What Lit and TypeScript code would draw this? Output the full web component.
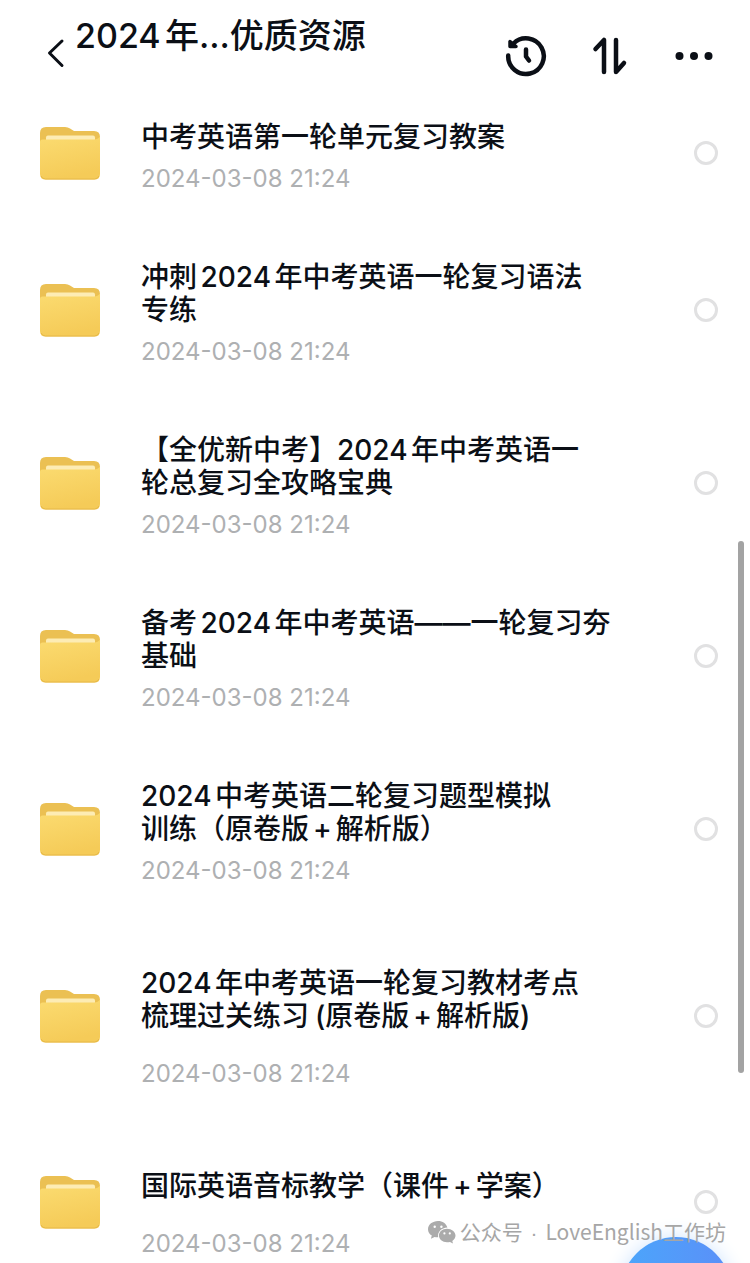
import { LitElement, html, css, svg } from "lit";
import { customElement, property } from "lit/decorators.js";
import { classMap } from "lit/directives/class-map.js";

interface Folder {
  lines: string[];
  date: string;
  loose?: boolean;
}

const DATE = "2024-03-08 21:24";

const FOLDERS: Folder[] = [
  { lines: ["中考英语第一轮单元复习教案"], date: DATE },
  { lines: ["冲刺2024年中考英语一轮复习语法", "专练"], date: DATE },
  { lines: ["【全优新中考】2024年中考英语一", "轮总复习全攻略宝典"], date: DATE },
  { lines: ["备考2024年中考英语——一轮复习夯", "基础"], date: DATE },
  { lines: ["2024中考英语二轮复习题型模拟", "训练（原卷版+解析版）"], date: DATE },
  { lines: ["2024年中考英语一轮复习教材考点", "梳理过关练习(原卷版+解析版)"], date: DATE, loose: true },
  { lines: ["国际英语音标教学（课件+学案）"], date: DATE, loose: true },
];

// Latin signs between Chinese characters get a little air around them.
const spaced = (line: string) =>
  line.split(/([+(])/).map((part) =>
    part === "+"
      ? html`<span class="plus">+</span>`
      : part === "("
        ? html`<span class="open">(</span>`
        : part
  );

const folderIcon = svg`
  <svg class="folder" viewBox="0 0 60 54" aria-hidden="true">
    <defs>
      <linearGradient id="front" x1="0" y1="0" x2="0.3" y2="1">
        <stop offset="0" stop-color="#fbdb70"/>
        <stop offset="1" stop-color="#f5cb58"/>
      </linearGradient>
    </defs>
    <path fill="#ebc053" d="M0 16V7Q0 1 6 1H25Q28 1 30 2.500L34 5H54Q60 5 60 11V20H0Z"/>
    <path fill="#fdecb4" d="M6 15V11.500Q6 9.500 8 9.500H53Q55 9.500 55 11.500V15Z"/>
    <path fill="url(#front)" d="M0 16Q0 13.500 2.500 13.500H54Q58 13.500 60 10.500V48Q60 53.500 54.500 53.500H5.500Q0 53.500 0 48Z"/>
    <path fill="none" stroke="#e6b848" d="M1 50Q2.500 53 5.500 53H54.500Q57.500 53 59 50"/>
  </svg>`;

@customElement("folder-row")
export class FolderRow extends LitElement {
  @property({ attribute: false }) folder!: Folder;

  static styles = css`
    :host {
      display: block;
    }
    .row {
      display: flex;
      align-items: center;
      padding: 36px 32px 36px 40px;
    }
    .folder {
      flex: none;
      width: 60px;
      height: 54px;
      margin: 0 41px 4px 0;
    }
    .text {
      flex: 1;
      min-width: 0;
    }
    .name {
      margin: 0 0 15px;
      font-size: 28px;
      font-weight: 500;
      line-height: 33px;
      color: #0b0f16;
      white-space: nowrap;
      text-autospace: normal;
    }
    .plus {
      margin: 0 4px;
    }
    .open {
      margin-left: 6px;
    }
    .date {
      display: block;
      font-size: 24px;
      line-height: 20px;
      color: #aeb0b2;
    }
    .pick {
      appearance: none;
      flex: none;
      width: 24px;
      height: 24px;
      margin: 0 0 4px;
      border: 3px solid #e1e1e2;
      border-radius: 50%;
      background: #fff;
    }
    .pick:checked {
      background: #4a90f5;
    }
    .loose {
      padding-top: 50px;
    }
    .loose .name {
      margin-bottom: 31px;
    }
    .loose .folder,
    .loose .pick {
      margin-bottom: 20px;
    }
  `;

  render() {
    const { lines, date, loose } = this.folder;
    return html`
      <div class=${classMap({ row: true, loose: !!loose })}>
        ${folderIcon}
        <div class="text">
          <h2 class="name">${lines.map((line, i) => (i ? html`<br />${spaced(line)}` : spaced(line)))}</h2>
          <time class="date">${date}</time>
        </div>
        <input class="pick" type="checkbox" aria-label=${lines.join("")} />
      </div>
    `;
  }
}

@customElement("app-root")
export class AppRoot extends LitElement {
  static styles = css`
    :host {
      display: block;
      position: relative;
      height: 100vh;
      overflow: hidden;
      background: #fff;
      font-family: Inter, "Noto Sans CJK SC", sans-serif;
      color: #0b0f16;
    }
    .bar {
      display: flex;
      align-items: flex-start;
      height: 85px;
      box-sizing: border-box;
      padding: 16px 34px 0 44px;
    }
    button {
      padding: 0;
      border: 0;
      background: none;
      color: inherit;
    }
    .icon {
      display: block;
    }
    .back {
      margin: 20px 7px 0 0;
    }
    .title {
      flex: 1;
      margin: 0;
      font-size: 34px;
      line-height: 40px;
      font-weight: 500;
      white-space: nowrap;
      text-autospace: normal;
    }
    .actions {
      display: flex;
      gap: 40px;
      margin-top: 18px;
    }
    .thumb {
      position: absolute;
      top: 541px;
      right: 6px;
      width: 6px;
      height: 532px;
      border-radius: 3px;
      background: #a3a3a3;
    }
    .add {
      position: absolute;
      right: 18px;
      bottom: -86px;
      width: 112px;
      height: 112px;
      border-radius: 50%;
      background: linear-gradient(90deg, #4ba6fb, #5b8ff8);
      box-shadow: 0 0 20px #cfe4fd;
    }
    .mark {
      position: absolute;
      right: 24px;
      bottom: 16px;
      display: flex;
      align-items: center;
      gap: 4px;
      font-family: "Noto Sans CJK SC", sans-serif;
      font-size: 21px;
      line-height: 28px;
      color: #a6a6a6;
      white-space: nowrap;
    }
    .dot {
      margin: 0 2px;
      font-family: "Liberation Sans", sans-serif;
    }
  `;

  render() {
    return html`
      <header class="bar">
        <button class="back" aria-label="返回">
          <svg class="icon" width="24" height="34" viewBox="0 0 24 34" fill="none" stroke="currentColor" stroke-width="3" stroke-linecap="round" stroke-linejoin="round">
            <path d="M18 5L5.500 17L18 29.500" />
          </svg>
        </button>
        <h1 class="title">2024年...优质资源</h1>
        <div class="actions">
          <button aria-label="历史">
            <svg class="icon" width="44" height="44" viewBox="0 0 44 44" fill="none" stroke="currentColor" stroke-width="4.500" stroke-linecap="round" stroke-linejoin="round">
              <path d="M4.200 21.500A17.800 17.800 0 1 0 9.500 9.500" />
              <path fill="currentColor" stroke-width="3.500" d="M6 7.500V12.500H12Z" />
              <path d="M22 15.500V22.500L25 26.500" />
            </svg>
          </button>
          <button aria-label="排序">
            <svg class="icon" width="44" height="44" viewBox="0 0 44 44" fill="none" stroke="currentColor" stroke-width="4.500" stroke-linecap="round" stroke-linejoin="round">
              <path d="M7.500 15L16 6V38" />
              <path d="M28 6V38L36 29" />
            </svg>
          </button>
          <button aria-label="更多">
            <svg class="icon" width="44" height="44" viewBox="0 0 44 44" fill="currentColor">
              <circle cx="7.500" cy="22" r="4" />
              <circle cx="22" cy="22" r="4" />
              <circle cx="36.500" cy="22" r="4" />
            </svg>
          </button>
        </div>
      </header>
      <main>${FOLDERS.map((f) => html`<folder-row .folder=${f}></folder-row>`)}</main>
      <div class="thumb"></div>
      <button class="add" aria-label="新建"></button>
      <div class="mark">
        <svg class="icon" width="28" height="24" viewBox="0 0 28 24" aria-hidden="true">
          <path fill="#ababab" d="M10 1C4.500 1 0 4.600 0 9.200C0 11.900 1.500 14.100 3.800 15.600L2.900 18.800L6.600 16.900Q8.200 17.400 10.200 17.300C9.300 12 13.300 8 19.400 7.600C18.400 3.700 14.600 1 10 1Z" />
          <path fill="#ababab" d="M19 8.800C14.300 8.800 10.900 11.900 10.900 15.600S14.400 22.300 19 22.300Q20.600 22.300 22 21.900L25 23.500L24.300 20.900C26.400 19.500 27.500 17.700 27.500 15.600C27.500 11.900 23.600 8.800 19 8.800Z" />
          <g fill="#fff">
            <circle cx="6.700" cy="6.700" r="1.200" />
            <circle cx="13.400" cy="6.700" r="1.200" />
            <circle cx="16.400" cy="13.400" r="1.100" />
            <circle cx="21.800" cy="13.400" r="1.100" />
          </g>
        </svg>
        <span>公众号<span class="dot"> · </span>LoveEnglish工作坊</span>
      </div>
    `;
  }
}
